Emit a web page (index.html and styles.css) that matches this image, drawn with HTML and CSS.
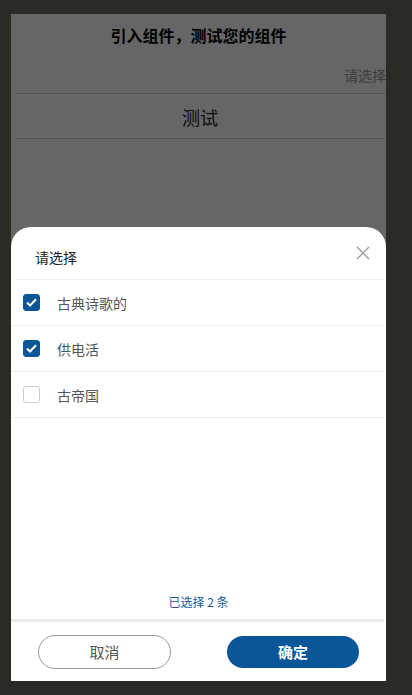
FILE: index.html
```html
<!DOCTYPE html>
<html>
<head>
  <meta charset="UTF-8">
  <title>多选组件测试</title>
  <link rel="stylesheet" href="styles.css">
</head>
<body>
  <div class="phone">
    <div class="page">
      <h2 class="page-title">引入组件，测试您的组件</h2>
      <div class="picker-row"><span class="picker-placeholder">请选择</span></div>
      <div class="test-row">测试</div>
    </div>

    <!-- mask + bottom sheet -->
    <div class="mask"></div>
    <div class="sheet">
      <div class="sheet-header">
        <span class="sheet-title">请选择</span>
        <svg class="close" width="16" height="16" viewBox="0 0 16 16">
          <path d="M2 2 L14 14 M14 2 L2 14" stroke="#9a9a9a" stroke-width="1.4" fill="none"/>
        </svg>
      </div>

      <ul class="options">
        <li class="option">
          <span class="check checked">
            <svg width="11" height="9" viewBox="0 0 11 9"><path d="M1 4.5 L4 7.5 L10 1.2" stroke="#fff" stroke-width="2" fill="none"/></svg>
          </span>
          <span class="option-label">古典诗歌的</span>
        </li>
        <li class="option">
          <span class="check checked">
            <svg width="11" height="9" viewBox="0 0 11 9"><path d="M1 4.5 L4 7.5 L10 1.2" stroke="#fff" stroke-width="2" fill="none"/></svg>
          </span>
          <span class="option-label">供电活</span>
        </li>
        <li class="option">
          <span class="check"></span>
          <span class="option-label">古帝国</span>
        </li>
      </ul>

      <div class="spacer"></div>
      <div class="count">已选择 2 条</div>
      <div class="bar"></div>

      <div class="sheet-footer">
        <button class="btn btn-cancel">取消</button>
        <button class="btn btn-ok">确定</button>
      </div>
    </div>
  </div>
</body>
</html>
```

FILE: styles.css
```css
body {
  margin: 0;
  background: #2b2b26;
  padding: 14px 0 0 11px;
  font-family: "Noto Sans CJK SC", "Noto Sans", sans-serif;
}

.phone {
  width: 375px;
  height: 667px;
  background: #fff;
  position: relative;
  overflow: hidden;
}

.page-title {
  margin: 0;
  padding-top: 8px;
  height: 28px;
  line-height: 26px;
  text-align: center;
  font-size: 16px;
  font-weight: bold;
  color: #000;
}

.picker-row {
  height: 43px;
  margin: 0 0 0 5px;
  border-bottom: 1px solid #ccc;
  text-align: right;
}

.picker-placeholder {
  display: inline-block;
  margin-top: 15px;
  font-size: 14px;
  line-height: 20px;
  color: #999;
}

.test-row {
  height: 44px;
  line-height: 46px;
  margin: 0 2px 0 5px;
  border-bottom: 1px solid #ccc;
  text-align: center;
  font-size: 18px;
  color: #222;
}

.mask {
  position: absolute;
  inset: 0;
  background: rgba(0, 0, 0, 0.6);
}

.sheet {
  position: absolute;
  left: 0;
  right: 0;
  bottom: 0;
  height: 454px;
  background: #fff;
  border-radius: 20px 20px 0 0;
  display: flex;
  flex-direction: column;
}

.sheet-header {
  height: 52px;
  margin: 0 2px 0 5px;
  border-bottom: 1px solid #f0f0f0;
  display: flex;
  align-items: center;
  justify-content: space-between;
  padding: 0 13px 0 19px;
}

.sheet-title {
  font-size: 14px;
  color: #222;
  margin-top: 8px;
}

.close {
  margin-bottom: 1px;
}

.options {
  list-style: none;
  margin: 0;
  padding: 0;
}

.option {
  height: 45px;
  margin-right: 2px;
  border-bottom: 1px solid #eee;
  display: flex;
  align-items: center;
  padding-left: 12px;
}

.check {
  width: 15px;
  height: 15px;
  border: 1px solid #ccc;
  border-radius: 3px;
  display: flex;
  align-items: center;
  justify-content: center;
  margin-right: 17px;
}

.check.checked {
  background: #0b5697;
  border-color: #0b5697;
}

.option-label {
  font-size: 14px;
  color: #555;
}

.spacer {
  flex: 1;
}

.count {
  text-align: center;
  font-size: 12px;
  line-height: 18px;
  color: #135a98;
  padding-bottom: 8px;
}

.bar {
  height: 3px;
  margin-right: 2px;
  background: #ececec;
}

.sheet-footer {
  height: 59px;
  display: flex;
  align-items: center;
  justify-content: space-between;
  padding: 0 27px;
}

.btn {
  width: 133px;
  border-radius: 17px;
  font-family: "Noto Sans CJK SC", sans-serif;
  font-size: 15px;
  cursor: pointer;
}

.btn-cancel {
  height: 34px;
  background: #fff;
  border: 1px solid #999;
  color: #555;
}

.btn-ok {
  width: 132px;
  height: 32px;
  background: #0b5699;
  border: none;
  color: #fff;
  font-weight: bold;
}
```
